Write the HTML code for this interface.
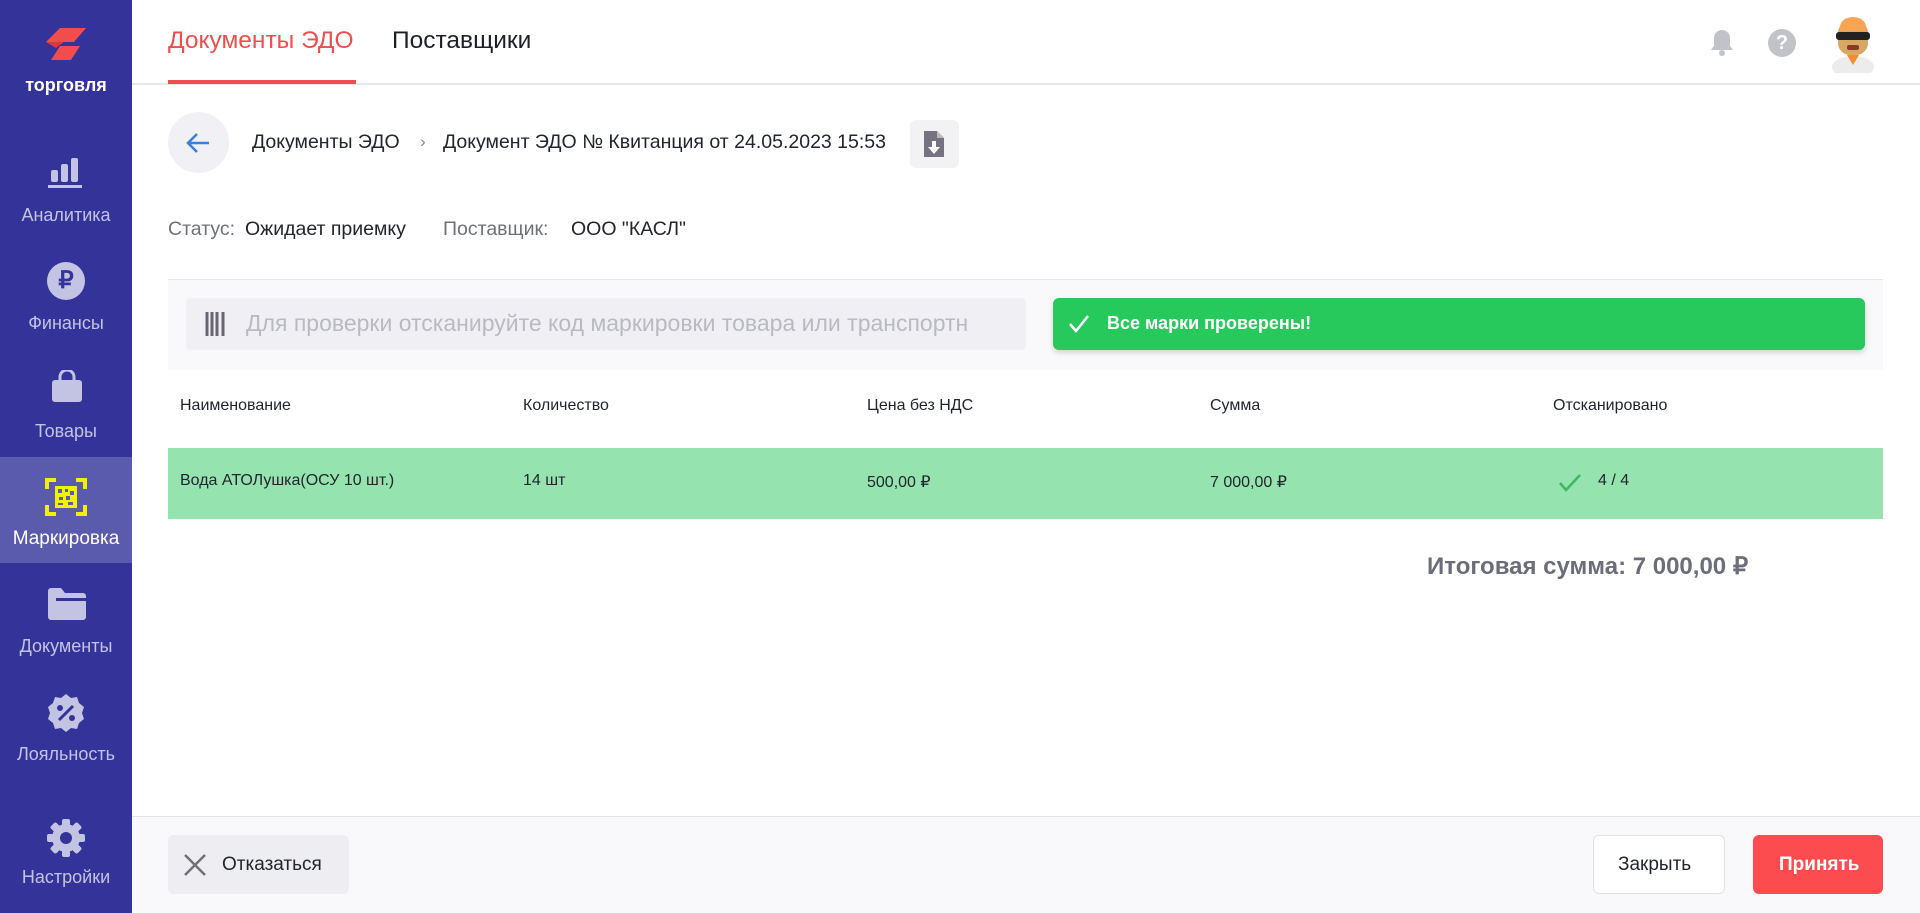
<!DOCTYPE html>
<html><head><meta charset="utf-8"><style>
*{box-sizing:border-box;margin:0;padding:0}
body{width:1920px;height:913px;overflow:hidden;background:#fff;font-family:"Liberation Sans",sans-serif;position:relative;color:#22252d}
.side{position:absolute;left:0;top:0;width:132px;height:913px;background:#33339a}
.si{position:absolute;left:0;width:132px;text-align:center;color:#c3c3e3;font-size:18px}
.abs{position:absolute}
.t{position:absolute;white-space:nowrap}
</style></head><body>
<div class="side">
 <svg class="abs" style="left:42px;top:26px" width="48" height="40" viewBox="0 0 48 40"><path d="M18 2h26l-12 14H4z" fill="#f24c4c"/><path d="M18 20h20l-9 14H9z" fill="#f24c4c"/><path d="M4 16h18l-8 6z" fill="#d83b3b"/></svg>
 <div class="si" style="top:75px;color:#fff;font-weight:bold;font-size:18px">торговля</div>
 <svg class="abs" style="left:48px;top:156px" width="36" height="34"><rect x="3" y="14" width="7" height="12" rx="2" fill="#c3c3e3"/><rect x="13" y="8" width="7" height="18" rx="2" fill="#c3c3e3"/><rect x="23" y="2" width="7" height="24" rx="2" fill="#c3c3e3"/><rect x="0" y="29" width="34" height="3" fill="#c3c3e3"/></svg>
 <div class="si" style="top:205px">Аналитика</div>
 <div class="abs" style="left:47px;top:262px;width:38px;height:38px;border-radius:50%;background:#c3c3e3;color:#33339a;font-weight:bold;font-size:24px;text-align:center;line-height:38px">₽</div>
 <div class="si" style="top:313px">Финансы</div>
 <svg class="abs" style="left:50px;top:370px" width="34" height="34"><path d="M10 10v-3a7 7 0 0 1 14 0v3" stroke="#c3c3e3" stroke-width="3" fill="none"/><rect x="2" y="10" width="30" height="22" rx="3" fill="#c3c3e3"/></svg>
 <div class="si" style="top:421px">Товары</div>
 <div class="abs" style="left:0;top:457px;width:132px;height:106px;background:#5b5bae"></div>
 <svg class="abs" style="left:45px;top:477px" width="42" height="40"><path d="M2 12V3h9M31 3h9v9M40 28v9h-9M11 37H2v-9" stroke="#f2f200" stroke-width="4" fill="none"/><rect x="10" y="9" width="22" height="22" fill="#f2f200"/><path d="M13 12h4v4h-4zM20 12h3v3h-3zM25 14h4v4h-4zM14 20h4v3h-4zM21 19h4v4h-4zM13 26h5v2h-5zM23 25h5v3h-5z" fill="#5b5bae"/></svg>
 <div class="si" style="top:528px;color:#fff;font-size:19px">Маркировка</div>
 <svg class="abs" style="left:48px;top:588px" width="38" height="32"><path d="M0 3a3 3 0 0 1 3-3h10l4 5h18a3 3 0 0 1 3 3v21a3 3 0 0 1-3 3H3a3 3 0 0 1-3-3z" fill="#c3c3e3"/><rect x="8" y="10" width="30" height="3" fill="#33339a"/></svg>
 <div class="si" style="top:636px">Документы</div>
 <svg class="abs" style="left:46px;top:693px" width="40" height="40" viewBox="0 0 40 40"><path d="M20 1l5 4 6-1 2 6 5 4-2 6 2 6-5 4-2 6-6-1-5 4-5-4-6 1-2-6-5-4 2-6-2-6 5-4 2-6 6 1z" fill="#c3c3e3"/><path d="M13 27l14-14" stroke="#33339a" stroke-width="3"/><circle cx="14" cy="15" r="3" fill="#33339a"/><circle cx="26" cy="25" r="3" fill="#33339a"/></svg>
 <div class="si" style="top:744px">Лояльность</div>
 <svg class="abs" style="left:46px;top:818px" width="40" height="40" viewBox="0 0 40 40"><g fill="#c3c3e3"><circle cx="20" cy="20" r="14"/><rect x="16" y="1" width="8" height="38" rx="2"/><rect x="1" y="16" width="38" height="8" rx="2"/><rect x="16" y="1" width="8" height="38" rx="2" transform="rotate(45 20 20)"/><rect x="16" y="1" width="8" height="38" rx="2" transform="rotate(-45 20 20)"/></g><circle cx="20" cy="20" r="6" fill="#33339a"/></svg>
 <div class="si" style="top:867px">Настройки</div>
</div>

<div class="abs" style="left:132px;top:83px;width:1788px;height:2px;background:#e8e8ec"></div>
<div class="t" style="left:168px;top:27px;font-size:24.5px;color:#ee4e4e">Документы ЭДО</div>
<div class="abs" style="left:168px;top:80px;width:188px;height:4px;background:#ee4e4e"></div>
<div class="t" style="left:392px;top:27px;font-size:24.5px;color:#1e2027">Поставщики</div>
<svg class="abs" style="left:1709px;top:28px" width="26" height="30"><path d="M13 2a8 8 0 0 1 8 8v8l3 4H2l3-4v-8a8 8 0 0 1 8-8z" fill="#c2c3c8"/><circle cx="13" cy="25" r="3" fill="#c2c3c8"/></svg>
<div class="abs" style="left:1768px;top:29px;width:28px;height:28px;border-radius:50%;background:#c2c3c8;color:#fff;font-weight:bold;font-size:20px;text-align:center;line-height:28px">?</div>
<svg class="abs" style="left:1830px;top:15px" width="46" height="58"><ellipse cx="23" cy="52" rx="21" ry="11" fill="#ececec"/><path d="M17 40h12l-6 10z" fill="#f58b2a"/><rect x="8" y="6" width="30" height="34" rx="12" fill="#d7a763"/><path d="M10 12a13 10 0 0 1 26 0v4H10z" fill="#f9a455"/><rect x="6" y="17" width="34" height="8" rx="3" fill="#222"/><rect x="17" y="30" width="12" height="5" rx="2" fill="#8a3b20"/></svg>

<div class="abs" style="left:168px;top:112px;width:61px;height:61px;border-radius:50%;background:#f1f1f5"></div>
<svg class="abs" style="left:185px;top:131px" width="26" height="24"><path d="M24 12H3M12 3l-9 9 9 9" stroke="#3c7de0" stroke-width="2.5" fill="none"/></svg>
<div class="t" style="left:252px;top:131px;font-size:19.5px">Документы ЭДО</div>
<div class="t" style="left:420px;top:132px;font-size:17px;color:#888">›</div>
<div class="t" style="left:443px;top:131px;font-size:19.5px">Документ ЭДО № Квитанция от 24.05.2023 15:53</div>
<div class="abs" style="left:910px;top:120px;width:49px;height:48px;border-radius:6px;background:#f2f2f5"></div>
<svg class="abs" style="left:922px;top:129px" width="24" height="30"><path d="M2 2h13l7 7v19H2z" fill="#777282"/><path d="M15 2v7h7" fill="#bbb"/><path d="M10 12h4v6h4l-6 7-6-7h4z" fill="#fff"/></svg>

<div class="t" style="left:168px;top:218px;font-size:19.5px;color:#6e717b">Статус:</div>
<div class="t" style="left:245px;top:218px;font-size:19.5px">Ожидает приемку</div>
<div class="t" style="left:443px;top:218px;font-size:19.5px;color:#6e717b">Поставщик:</div>
<div class="t" style="left:571px;top:218px;font-size:19.5px">ООО "КАСЛ"</div>

<div class="abs" style="left:168px;top:279px;width:1715px;height:91px;background:#f9f9fb;border-top:1px solid #e8e8ec"></div>
<div class="abs" style="left:186px;top:298px;width:840px;height:52px;border-radius:5px;background:#f0f0f4"></div>
<svg class="abs" style="left:205px;top:312px" width="24" height="24"><path d="M2 0v24M7 0v24M12 0v24M18 0v24" stroke="#6a6470" stroke-width="3"/></svg>
<div class="t" style="left:246px;top:310px;font-size:23px;color:#b9b9c2;width:768px;overflow:hidden">Для проверки отсканируйте код маркировки товара или транспортн</div>
<div class="abs" style="left:1053px;top:298px;width:812px;height:52px;border-radius:6px;background:#27c95c;box-shadow:0 3px 6px rgba(0,0,0,.15)"></div>
<svg class="abs" style="left:1068px;top:314px" width="22" height="20"><path d="M2 10l6 7L20 2" stroke="#fff" stroke-width="2.5" fill="none"/></svg>
<div class="t" style="left:1107px;top:313px;font-size:18px;font-weight:bold;color:#fff">Все марки проверены!</div>

<div class="t" style="left:180px;top:397px;font-size:16px">Наименование</div>
<div class="t" style="left:523px;top:397px;font-size:16px">Количество</div>
<div class="t" style="left:867px;top:397px;font-size:16px">Цена без НДС</div>
<div class="t" style="left:1210px;top:397px;font-size:16px">Сумма</div>
<div class="t" style="left:1553px;top:397px;font-size:16px">Отсканировано</div>
<div class="abs" style="left:168px;top:448px;width:1715px;height:71px;background:#95e4b0"></div>
<div class="t" style="left:180px;top:472px;font-size:16px">Вода АТОЛушка(ОСУ 10 шт.)</div>
<div class="t" style="left:523px;top:472px;font-size:16px">14 шт</div>
<div class="t" style="left:867px;top:472px;font-size:16px">500,00 ₽</div>
<div class="t" style="left:1210px;top:472px;font-size:16px">7 000,00 ₽</div>
<svg class="abs" style="left:1558px;top:473px" width="24" height="20"><path d="M2 10l6 7L22 2" stroke="#3cb862" stroke-width="2.5" fill="none"/></svg>
<div class="t" style="left:1598px;top:472px;font-size:16px">4 / 4</div>
<div class="t" style="left:1427px;top:552px;font-size:24px;font-weight:bold;color:#6b6e78">Итоговая сумма: 7 000,00 ₽</div>

<div class="abs" style="left:132px;top:816px;width:1788px;height:97px;background:#f9f9fb;border-top:1px solid #e4e4e8"></div>
<div class="abs" style="left:168px;top:835px;width:181px;height:59px;border-radius:6px;background:#eeeef2"></div>
<svg class="abs" style="left:183px;top:853px" width="24" height="24"><path d="M2 2l20 20M22 2L2 22" stroke="#707078" stroke-width="2.5"/></svg>
<div class="t" style="left:222px;top:854px;font-size:19px">Отказаться</div>
<div class="abs" style="left:1593px;top:835px;width:132px;height:59px;border-radius:6px;background:#fff;border:1px solid #e2e2e6"></div>
<div class="t" style="left:1618px;top:854px;font-size:19px">Закрыть</div>
<div class="abs" style="left:1753px;top:835px;width:130px;height:59px;border-radius:6px;background:#fc4c4f"></div>
<div class="t" style="left:1779px;top:854px;font-size:19px;font-weight:bold;color:#fff">Принять</div>
</body></html>
